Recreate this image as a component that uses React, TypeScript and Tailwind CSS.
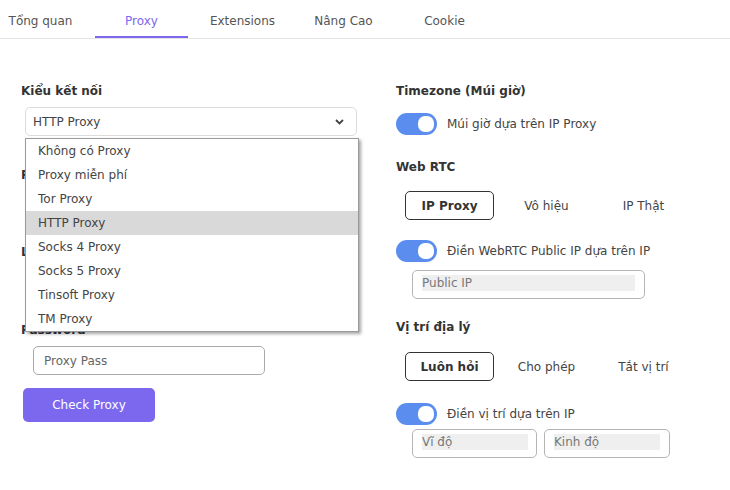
import React from "react";

const FONT = { fontFamily: '"DejaVu Sans", Verdana, sans-serif' };

function Toggle() {
  return (
    <div className="w-[41px] h-[22px] rounded-full bg-[#5b8def] flex items-center justify-end pr-[3px] shrink-0">
      <div className="w-[16px] h-[16px] rounded-[7px] bg-white" />
    </div>
  );
}

function Segments({ items }: { items: string[] }) {
  return (
    <div className="flex gap-[8px] ml-[9px]">
      {items.map((t, i) => (
        <div
          key={t}
          className={
            "w-[89px] h-[29px] flex items-center justify-center rounded-[5px] text-[12px] " +
            (i === 0 ? "border border-[#333] font-bold text-[#333]" : "border border-transparent text-[#444]")
          }
        >
          {t}
        </div>
      ))}
    </div>
  );
}

function FieldBox({ w, placeholder, innerW }: { w: string; placeholder: string; innerW: string }) {
  return (
    <div className={`${w} h-[29px] border border-[#b5b5b5] rounded-[5px] pl-[9px] pt-[4px]`}>
      <div className={`${innerW} h-[16px] bg-[#efefef] text-[12px] leading-[16px] text-[#777]`}>{placeholder}</div>
    </div>
  );
}

export default function App() {
  const tabs = ["Tổng quan", "Proxy", "Extensions", "Nâng Cao", "Cookie"];
  const options = [
    "Không có Proxy",
    "Proxy miễn phí",
    "Tor Proxy",
    "HTTP Proxy",
    "Socks 4 Proxy",
    "Socks 5 Proxy",
    "Tinsoft Proxy",
    "TM Proxy",
  ];
  return (
    <div className="w-[730px] h-[490px] bg-white overflow-hidden" style={FONT}>
      <div className="h-[39px] border-b border-[#e4e4e4] flex -ml-[10px]">
        {tabs.map((t, i) => (
          <div key={t} className="w-[101px] h-full flex flex-col items-center">
            <div className={"flex-1 flex items-center pt-[5px] text-[12px] " + (i === 1 ? "text-[#7b68ee]" : "text-[#555]")}>{t}</div>
            <div className={"h-[2px] w-[93px] " + (i === 1 ? "bg-[#7b68ee]" : "")} />
          </div>
        ))}
      </div>

      <div className="flex pt-[44px]">
        {/* left column */}
        <div className="w-[375px] pl-[21px] relative">
          <div className="text-[12px] font-bold text-[#333] leading-[16px]">Kiểu kết nối</div>
          <div className="ml-[4px] mt-[8px] w-[332px] h-[29px] border border-[#dcdcdc] rounded-[5px] flex items-center justify-between pl-[7px] pr-[12px] text-[12px] text-[#444]">
            <span>HTTP Proxy</span>
            <svg width="9" height="6" viewBox="0 0 9 6">
              <path d="M1 1l3.5 3.5L8 1" fill="none" stroke="#444" strokeWidth="1.8" />
            </svg>
          </div>
          <div className="mt-[31px] text-[12px] font-bold text-[#333] leading-[16px]">Proxy</div>
          <div className="ml-[12px] mt-[7px] w-[232px] h-[29px] border border-[#aaa] rounded-[5px]" />
          <div className="mt-[25px] text-[12px] font-bold text-[#333] leading-[16px]">Login</div>
          <div className="ml-[12px] mt-[8px] w-[232px] h-[29px] border border-[#aaa] rounded-[5px]" />
          <div className="mt-[25px] text-[12px] font-bold text-[#333] leading-[16px]">Password</div>
          <div className="ml-[12px] mt-[8px] w-[232px] h-[29px] border border-[#aaa] rounded-[5px] flex items-center pl-[10px] text-[12px] text-[#666]">
            Proxy Pass
          </div>
          <button className="ml-[2px] mt-[13px] w-[132px] h-[34px] rounded-[5px] bg-[#7b68ee] text-white text-[12px] flex items-center justify-center">
            Check Proxy
          </button>

          {/* dropdown overlay */}
          <div className="absolute left-[25px] top-[55px] w-[334px] border border-[#9a9a9a] bg-white shadow-[2px_2px_3px_rgba(0,0,0,0.35)]">
            {options.map((o, i) => (
              <div
                key={o}
                className={"h-[24px] flex items-center pl-[12px] text-[12px] text-[#444] " + (i === 3 ? "bg-[#d9d9d9]" : "")}
              >
                {o}
              </div>
            ))}
          </div>
        </div>

        {/* right column */}
        <div className="flex-1 pl-[21px] flex flex-col">
          <div className="text-[12px] font-bold text-[#333] leading-[16px]">Timezone (Múi giờ)</div>
          <div className="mt-[14px] flex items-center gap-[10px]">
            <Toggle />
            <span className="text-[12px] text-[#444]">Múi giờ dựa trên IP Proxy</span>
          </div>
          <div className="mt-[24px] text-[12px] font-bold text-[#333] leading-[16px]">Web RTC</div>
          <div className="mt-[16px]">
            <Segments items={["IP Proxy", "Vô hiệu", "IP Thật"]} />
          </div>
          <div className="mt-[20px] flex items-center gap-[10px]">
            <Toggle />
            <span className="text-[12px] text-[#444]">Điền WebRTC Public IP dựa trên IP</span>
          </div>
          <div className="mt-[8px] ml-[16px]">
            <FieldBox w="w-[233px]" innerW="w-[213px]" placeholder="Public IP" />
          </div>
          <div className="mt-[20px] text-[12px] font-bold text-[#333] leading-[16px]">Vị trí địa lý</div>
          <div className="mt-[17px]">
            <Segments items={["Luôn hỏi", "Cho phép", "Tắt vị trí"]} />
          </div>
          <div className="mt-[22px] flex items-center gap-[10px]">
            <Toggle />
            <span className="text-[12px] text-[#444]">Điền vị trí dựa trên IP</span>
          </div>
          <div className="mt-[4px] ml-[16px] flex gap-[7px]">
            <FieldBox w="w-[125px]" innerW="w-[106px]" placeholder="Vĩ độ" />
            <FieldBox w="w-[126px]" innerW="w-[106px]" placeholder="Kinh độ" />
          </div>
        </div>
      </div>
    </div>
  );
}
